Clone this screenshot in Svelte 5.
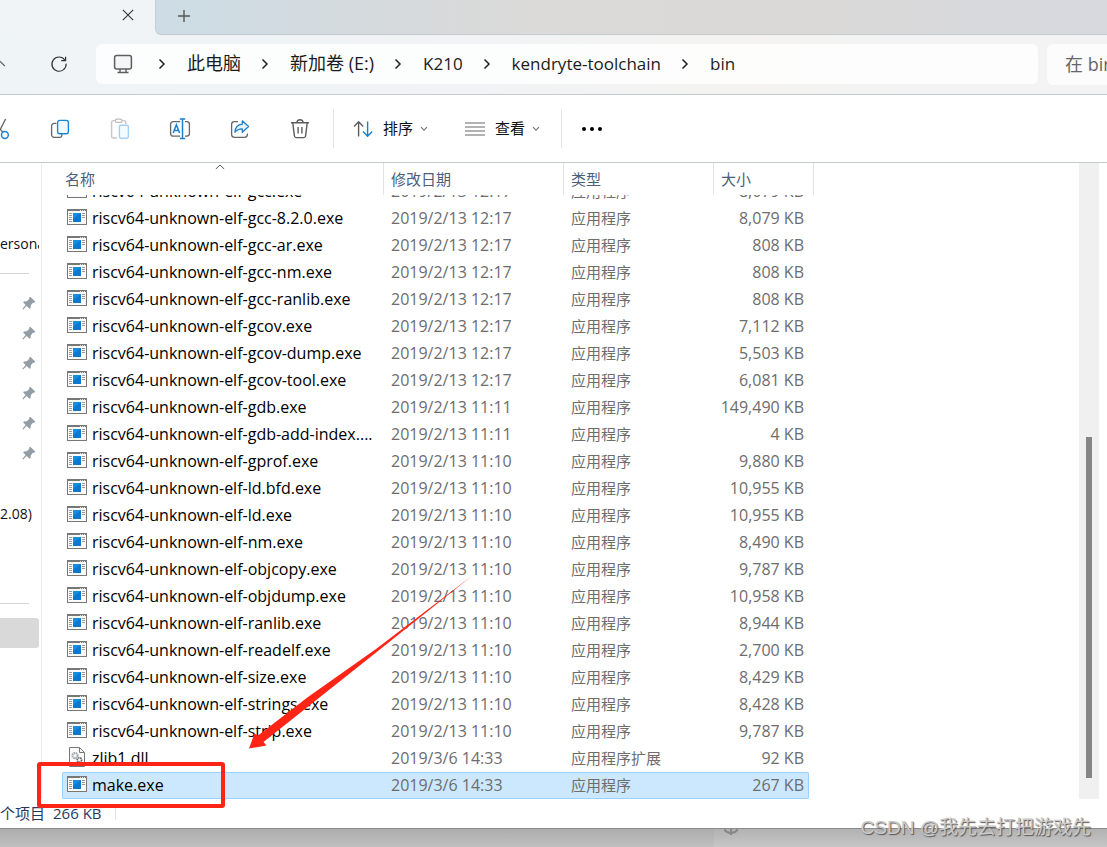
<script>
  const crumbs = [
    { label: '此电脑', cjk: true },
    { label: '新加卷 (E:)', cjk: true },
    { label: 'K210' },
    { label: 'kendryte-toolchain' },
    { label: 'bin' }
  ];

  const p = 'riscv64-unknown-elf-';
  const app = '应用程序';
  const a = '2019/2/13 12:17';
  const b = '2019/2/13 11:11';
  const c = '2019/2/13 11:10';
  const d = '2019/3/6 14:33';
  const files = [
    [p + 'gcc.exe', a, app, '8,079 KB'],
    [p + 'gcc-8.2.0.exe', a, app, '8,079 KB'],
    [p + 'gcc-ar.exe', a, app, '808 KB'],
    [p + 'gcc-nm.exe', a, app, '808 KB'],
    [p + 'gcc-ranlib.exe', a, app, '808 KB'],
    [p + 'gcov.exe', a, app, '7,112 KB'],
    [p + 'gcov-dump.exe', a, app, '5,503 KB'],
    [p + 'gcov-tool.exe', a, app, '6,081 KB'],
    [p + 'gdb.exe', b, app, '149,490 KB'],
    [p + 'gdb-add-index....', b, app, '4 KB'],
    [p + 'gprof.exe', c, app, '9,880 KB'],
    [p + 'ld.bfd.exe', c, app, '10,955 KB'],
    [p + 'ld.exe', c, app, '10,955 KB'],
    [p + 'nm.exe', c, app, '8,490 KB'],
    [p + 'objcopy.exe', c, app, '9,787 KB'],
    [p + 'objdump.exe', c, app, '10,958 KB'],
    [p + 'ranlib.exe', c, app, '8,944 KB'],
    [p + 'readelf.exe', c, app, '2,700 KB'],
    [p + 'size.exe', c, app, '8,429 KB'],
    [p + 'strings.exe', c, app, '8,428 KB'],
    [p + 'strip.exe', c, app, '9,787 KB'],
    ['zlib1.dll', d, '应用程序扩展', '92 KB'],
    ['make.exe', d, app, '267 KB']
  ];
  const pins = [1, 2, 3, 4, 5, 6];
  let selected = $state('make.exe');
</script>

{#snippet chevron()}
  <svg class="chev" width="8" height="12" viewBox="0 0 8 12"><path d="M1.5 1.5 6 6 1.5 10.5" fill="none" stroke="#222" stroke-width="1.5" /></svg>
{/snippet}

{#snippet down()}
  <svg width="8" height="6" viewBox="0 0 8 6"><path d="M1 1.2 4 4.2 7 1.2" fill="none" stroke="#777" stroke-width="1.1" /></svg>
{/snippet}

<div class="window">
  <header class="tabs">
    <div class="tab">
      <button class="close" aria-label="关闭">
        <svg width="12" height="12" viewBox="0 0 12 12"><path d="M.8.8 11.2 11.2M11.2.8.8 11.2" stroke="#333" stroke-width="1.1" /></svg>
      </button>
    </div>
    <div class="strip">
      <button class="plus" aria-label="新建">
        <svg width="12" height="12" viewBox="0 0 12 12"><path d="M6 0V12M0 6H12" stroke="#555" stroke-width="1.4" /></svg>
      </button>
    </div>
  </header>

  <nav class="nav">
    <button class="up" aria-label="向上">
      <svg width="6" height="14" viewBox="0 0 6 14"><path d="M-1 3.5 4.8 9" fill="none" stroke="#666" stroke-width="1.3" /></svg>
    </button>
    <button class="reload" aria-label="刷新">
      <svg width="18" height="18" viewBox="0 0 18 18"><path d="M14.8 5A7.1 7.1 0 1 0 16.1 8.6M15.6 1.8V5.6H11.2" fill="none" stroke="#333" stroke-width="1.2" /></svg>
    </button>
    <div class="address">
      <svg class="pc" width="20" height="20" viewBox="0 0 20 20"><rect x="1.6" y="1.6" width="16.8" height="13.4" rx="2" fill="#f5f6f7" stroke="#5c5f62" stroke-width="1.5" /><path d="M7 15V18.4M13 15V18.4M4.5 18.5H15.5" stroke="#5c5f62" stroke-width="1.4" /></svg>
      {#each crumbs as item}
        {@render chevron()}
        <a href="#top" class:cjk={item.cjk}>{item.label}</a>
      {/each}
    </div>
    <input class="search" type="text" aria-label="搜索" placeholder="在 bin" />
  </nav>

  <div class="toolbar">
    <button class="cut" aria-label="剪切">
      <svg width="10" height="22" viewBox="0 0 10 22"><path d="M5.6 1 0 12" stroke="#666" stroke-width="1.4" /><path d="M-2 9 2.8 14" stroke="#666" stroke-width="1.3" /><circle cx="4.9" cy="17" r="3.4" fill="none" stroke="#1683d8" stroke-width="1.5" /></svg>
    </button>
    <button class="tool" aria-label="复制">
      <svg width="20" height="20" viewBox="0 0 20 20"><path d="M6.4 4.4H4.2A2.6 2.6 0 0 0 1.6 7V15.8A2.6 2.6 0 0 0 4.2 18.4H9.6A2.3 2.3 0 0 0 11.8 16.2V15" fill="none" stroke="#666" stroke-width="1.3" /><rect x="7.6" y="1.4" width="10.8" height="13.4" rx="2.2" fill="#f3f9ff" stroke="#1a86da" stroke-width="1.4" /></svg>
    </button>
    <button class="tool" aria-label="粘贴">
      <svg width="20" height="22" viewBox="0 0 20 22"><path d="M7 20H3.4A1.8 1.8 0 0 1 1.6 18.2V4.4A1.8 1.8 0 0 1 3.4 2.6H5.5M12 2.6H13.8A1.8 1.8 0 0 1 15.6 4.4V6" fill="none" stroke="#c6c6c6" stroke-width="1.4" /><rect x="5.4" y="1.2" width="6.6" height="3.2" rx="1.4" fill="#fff" stroke="#bdbdbd" stroke-width="1.2" /><rect x="9.4" y="7.2" width="9" height="13" rx="1.6" fill="#f5faff" stroke="#a4cff0" stroke-width="1.4" /></svg>
    </button>
    <button class="tool" aria-label="重命名">
      <svg width="22" height="22" viewBox="0 0 22 22"><path d="M11.2 3.6H4.2A2.6 2.6 0 0 0 1.6 6.2V15.6A2.6 2.6 0 0 0 4.2 18.2H11.2M16 3.6H17.8A2.6 2.6 0 0 1 20.4 6.2V15.6A2.6 2.6 0 0 1 17.8 18.2H16" fill="none" stroke="#666" stroke-width="1.3" /><path d="M10.8 1H16.2M13.5 1V20.6M10.8 20.6H16.2M4.2 15 7.4 6.8 10.6 15M5.3 12.4H9.5" fill="none" stroke="#1a7fd0" stroke-width="1.5" /></svg>
    </button>
    <button class="tool" aria-label="共享">
      <svg width="20" height="20" viewBox="0 0 20 20"><path d="M8 2.6H4.4A2.8 2.8 0 0 0 1.6 5.4V15.6A2.8 2.8 0 0 0 4.4 18.4H14.6A2.8 2.8 0 0 0 17.4 15.6V14.4" fill="none" stroke="#666" stroke-width="1.3" /><path d="M12.3 1.8 18.6 7.6 12.3 13.2V9.8C9 9.7 6.8 10.8 5 13.2 5.2 8.6 8 5.6 12.3 5.2Z" fill="#e9f4fd" stroke="#1a7fd0" stroke-width="1.3" stroke-linejoin="round" /></svg>
    </button>
    <button class="tool" aria-label="删除">
      <svg width="20" height="20" viewBox="0 0 20 20"><path d="M1 3.8H19M7 3.6A3 2.8 0 0 1 13 3.6M2.8 4 4.4 16.8A2 2 0 0 0 6.4 18.6H13.6A2 2 0 0 0 15.6 16.8L17.2 4M8.1 8V14.6M11.9 8V14.6" fill="none" stroke="#5c5c5c" stroke-width="1.4" /></svg>
    </button>
    <span class="sep"></span>
    <button class="menu sort">
      <svg width="20" height="18" viewBox="0 0 20 18"><path d="M5.6 16.6V2M1 6.4 5.6 1.8 10.2 6.4" fill="none" stroke="#5c5c5c" stroke-width="1.4" /><path d="M14.6 1.4V16M10 11.6 14.6 16.2 19.2 11.6" fill="none" stroke="#1a7fd0" stroke-width="1.4" /></svg>
      <span>排序</span>{@render down()}
    </button>
    <button class="menu view">
      <svg width="20" height="14" viewBox="0 0 20 14"><path d="M0 1H20M0 5H20M0 9H20M0 13H20" stroke="#666" stroke-width="1.2" /></svg>
      <span>查看</span>{@render down()}
    </button>
    <span class="sep"></span>
    <button class="more" aria-label="更多">
      <svg width="22" height="6" viewBox="0 0 22 6"><circle cx="3" cy="3" r="2" /><circle cx="11" cy="3" r="2" /><circle cx="19" cy="3" r="2" /></svg>
    </button>
  </div>

  <main class="body">
    <aside class="side">
      <div class="node first">ersona</div>
      <hr />
      {#each pins as pin (pin)}
        <div class="pin">
          <svg width="14" height="14" viewBox="0 0 14 14"><path d="M8.2.8 13.2 5.6 12.4 6.8 11 6.8 8.8 9.2 8.6 12.2 7.6 12.8 4.6 10 1.2 13.4.4 12.8 3.6 9 1.2 6.4 1.8 5.4 4.8 5.2 7.2 3 7.2 1.4Z" fill="#929da5" /></svg>
        </div>
      {/each}
      <div class="node drive">2.08)</div>
      <hr class="low" />
      <div class="current"></div>
    </aside>

    <section class="list">
      <table>
        <thead>
          <tr>
            <th>名称<svg class="asc" width="10" height="6" viewBox="0 0 10 6"><path d="M.8 5 5 1 9.2 5" fill="none" stroke="#555" stroke-width="1" /></svg></th>
            <th>修改日期</th>
            <th>类型</th>
            <th>大小</th>
          </tr>
        </thead>
        <tbody>
          {#each files as [name, date, type, size]}
            <tr class:selected={selected === name} onclick={() => (selected = name)}>
              <td class="name">
                {#if name.endsWith('.dll')}
                  <svg width="20" height="20" viewBox="0 0 20 20"><path d="M2.5.5H12.5L17.5 5.5V19.5H2.5Z" fill="#fafafa" stroke="#777" /><path d="M12.5.5V5.5H17.5" fill="none" stroke="#777" /><circle cx="8" cy="8.6" r="2.6" fill="none" stroke="#9aa4ad" stroke-width="2" stroke-dasharray="1.5 .6" /><circle cx="12.4" cy="13" r="2.2" fill="none" stroke="#646c74" stroke-width="1.8" stroke-dasharray="1.4 .6" /></svg>
                {:else}
                  <svg width="20" height="16" viewBox="0 0 20 16"><rect x=".5" y=".5" width="19" height="15" fill="#fbfbfb" stroke="#777" /><path d="M0 1H20" stroke="#777" stroke-width="2" /><path d="M13 1.5H18" stroke="#ddd" stroke-dasharray="1 1" /><path d="M2 4.5H5M2 6.5H5M2 8.5H5M2 10.5H5M2 12.5H5M15 4.5H18M15 6.5H18M15 8.5H18" stroke="#999" /><rect x="6" y="4" width="8" height="9" fill="#0f78cd" /><path d="M6 4H14L6 10Z" fill="#168ee0" /></svg>
                {/if}
                <span>{name}</span>
              </td>
              <td class="num">{date}</td>
              <td>{type}</td>
              <td class="num size">{size}</td>
            </tr>
          {/each}
        </tbody>
      </table>
    </section>
    <div class="scroll"><div class="thumb"></div></div>
  </main>

  <footer class="status"><span>个项目</span><span class="num">266 KB</span><i></i></footer>
  <div class="desk">
    <div class="left"></div>
    <svg width="14" height="7" viewBox="0 0 14 7"><path d="M0 0C2 3 4 4 7 4S12 3 14 0M7 0V6" fill="none" stroke="#888" stroke-width="2" /></svg>
  </div>

  <div class="mark"></div>
  <svg class="arrow" width="226" height="176" viewBox="0 0 226 176"><path d="M225 1 130 77 15.5 168 18.5 171.5 1 174.5 6.5 159.5 10 161.5 60 123 128 75Z" fill="#ff2516" /></svg>
  <div class="credit">CSDN @我先去打把游戏先</div>
</div>

<style>
  :global(body) {
    margin: 0;
    background: #bbb;
  }
  .window {
    position: relative;
    overflow: hidden;
    background: #fff;
    color: #111;
    font: 15px/27px 'Open Sans', 'Noto Sans CJK SC', sans-serif;
  }
  button {
    display: flex;
    align-items: center;
    justify-content: center;
    border: 0;
    padding: 0;
    background: none;
    color: inherit;
    font: inherit;
  }
  svg {
    display: block;
    flex: none;
  }
  .tabs {
    display: flex;
    height: 35px;
    background: #f0f4f7;
  }
  .tab {
    display: flex;
    justify-content: flex-end;
    width: 155px;
  }
  .close {
    width: 54px;
    height: 30px;
  }
  .strip {
    flex: 1;
    box-sizing: border-box;
    border-bottom: 1px solid #c3cacd;
    border-left: 1px solid #c3d0d8;
    border-bottom-left-radius: 6px;
    background: linear-gradient(90deg, #cddde6, #d5dadd 22%, #dbdad8 42%, #dad9d8 70%, #d7d9df);
  }
  .plus {
    width: 56px;
    height: 31px;
  }
  .nav {
    display: flex;
    align-items: flex-start;
    box-sizing: border-box;
    height: 60px;
    padding-top: 9px;
    border-bottom: 1px solid #c4cbcf;
    background: linear-gradient(90deg, #eff4f7, #f1f3f4 45%, #f4f3f1 68%, #f3f3f3 80%);
  }
  .up {
    width: 30px;
    height: 40px;
    justify-content: flex-start;
  }
  .reload {
    width: 57px;
    height: 40px;
    margin-right: 9px;
  }
  .address {
    display: flex;
    flex: 1;
    align-items: center;
    height: 40px;
    border-radius: 6px;
    background: rgba(255, 255, 255, 0.8);
    font-size: 17px;
  }
  .pc {
    margin: 0 9px 0 17px;
  }
  .address a {
    padding-bottom: 2px;
    color: #1b1b1b;
    text-decoration: none;
    white-space: nowrap;
  }
  .address .cjk {
    font-size: 18px;
  }
  .chev {
    margin: 0 21px 0 20px;
  }
  .pc + .chev {
    margin-left: 16px;
  }
  .search {
    box-sizing: border-box;
    width: 60px;
    height: 41px;
    margin-left: 9px;
    border: 0;
    border-radius: 6px 0 0 6px;
    padding: 0 0 2px 18px;
    background: #fcfcfc;
    font: 18px 'Open Sans', 'Noto Sans CJK SC', sans-serif;
  }
  .search::placeholder {
    color: #666;
    opacity: 1;
  }
  .toolbar {
    display: flex;
    align-items: center;
    height: 67px;
    border-bottom: 1px solid #c4c9cc;
  }
  .cut {
    width: 30px;
    justify-content: flex-start;
  }
  .tool {
    width: 60px;
    height: 40px;
  }
  .sep {
    width: 1px;
    height: 39px;
    margin-left: 3px;
    background: #e4e4e4;
  }
  .menu {
    gap: 10px;
  }
  .menu span + :global(svg) {
    margin-left: -3px;
  }
  .sort {
    margin-left: 19px;
  }
  .view {
    margin: 0 18px 0 37px;
  }
  .more {
    margin-left: 19px;
  }
  .body {
    display: flex;
  }
  .side {
    width: 42px;
    box-sizing: border-box;
    overflow: hidden;
    border-right: 1px solid #ececec;
  }
  .node {
    width: 39px;
    height: 30px;
    overflow: hidden;
    line-height: 30px;
    font-size: 14px;
    white-space: nowrap;
  }
  .first {
    margin-top: 66px;
  }
  .drive {
    margin-top: 31px;
  }
  hr {
    width: 29px;
    height: 1px;
    margin: 14px 0;
    border: 0;
    background: #d4d4d4;
  }
  hr.low {
    margin-top: 74px;
  }
  .pin {
    display: flex;
    align-items: center;
    height: 30px;
    padding-left: 22px;
  }
  .current {
    width: 39px;
    height: 30px;
    border-radius: 0 3px 3px 0;
    background: #d9d9d9;
  }
  .list {
    flex: 1;
    overflow: hidden;
  }
  table,
  thead,
  tbody {
    display: block;
  }
  thead tr {
    display: grid;
    grid-template-columns: 342px 180px 150px 100px;
    position: relative;
    z-index: 1;
    height: 32px;
    background: #fff;
  }
  th {
    position: relative;
    border-right: 1px solid #e2e2e2;
    padding: 0 0 0 7px;
    color: #4c607a;
    font-weight: 400;
    line-height: 32px;
    text-align: left;
  }
  th:first-child {
    padding-left: 23px;
  }
  .asc {
    position: absolute;
    top: 1px;
    left: 173px;
  }
  tbody {
    margin-top: -17px;
    padding-left: 20px;
  }
  tbody tr {
    display: grid;
    grid-template-columns: 322px 180px 150px 95px;
    width: 747px;
    height: 27px;
  }
  td {
    padding: 0 0 0 7px;
    color: #6d6d6d;
    white-space: nowrap;
  }
  .name {
    display: flex;
    align-items: center;
    gap: 5px;
    padding-left: 5px;
    color: #000;
    font-size: 16px;
  }
  .name svg {
    margin-bottom: 3px;
  }
  .num {
    font-size: 16px;
  }
  .size {
    padding: 0 5px 0 0;
    text-align: right;
  }
  .selected {
    border-radius: 2px;
    background: #cce8ff;
    box-shadow: inset 0 0 0 1px #99d1ff;
  }
  .scroll {
    width: 20px;
    margin-right: 8px;
    background: #f0f0f0;
  }
  .thumb {
    width: 6px;
    height: 341px;
    margin: 274px 0 0 7px;
    background: #858585;
  }
  .status {
    display: flex;
    align-items: center;
    gap: 8px;
    height: 29px;
    color: #1f3a5f;
  }
  .status i {
    width: 1px;
    height: 12px;
    margin-left: 5px;
    background: #e4e4e4;
  }
  .status .num {
    font-size: 15px;
  }
  .desk {
    display: flex;
    height: 18px;
    border-top: 1px solid #8c8c8c;
    background: linear-gradient(#b2b2b2, #c6c6c6);
  }
  .desk .left {
    width: 714px;
    margin-right: 10px;
    background: linear-gradient(#adadad, #c0c0c0);
  }
  .mark {
    position: absolute;
    top: 762px;
    left: 37px;
    box-sizing: border-box;
    width: 188px;
    height: 46px;
    border: 4px solid #ff2516;
    border-radius: 3px;
  }
  .arrow {
    position: absolute;
    top: 574px;
    left: 248px;
  }
  .credit {
    position: absolute;
    right: 16px;
    bottom: 6px;
    color: #c9c9c9;
    font: 19px/27px 'Liberation Sans', 'Noto Sans CJK SC', sans-serif;
    text-shadow: 1px 1px 1px #555;
  }
</style>
